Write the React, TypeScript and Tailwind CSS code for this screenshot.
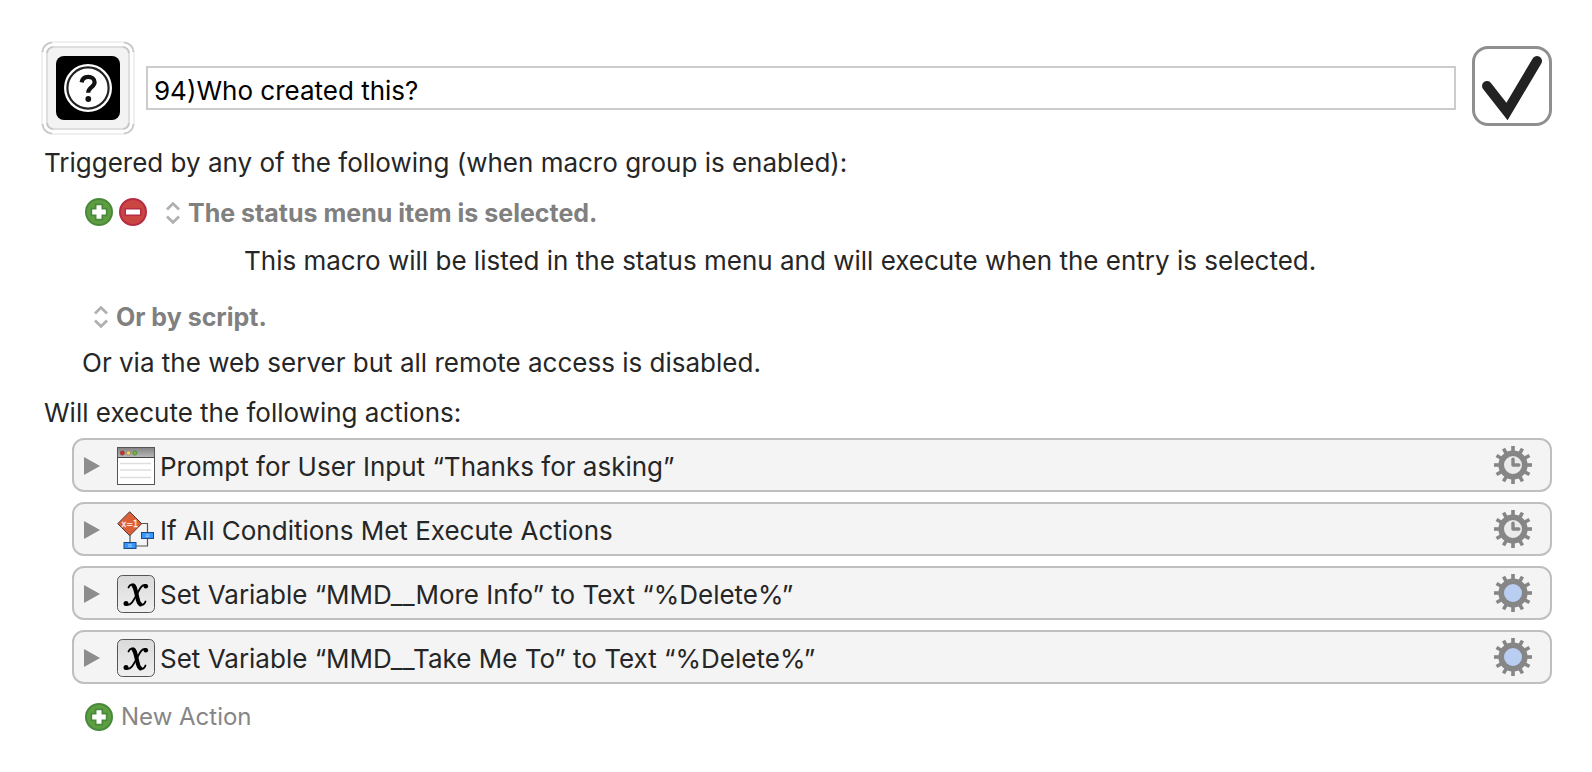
import { useState } from 'react';
import type { ReactNode } from 'react';

const gearAngles = [0, 30, 60, 90, 120, 150, 180, 210, 240, 270, 300, 330];

function Gear({ kind }: { kind: 'clock' | 'plain' }) {
  return (
    <svg viewBox="0 0 38 38" className="size-[38px]" aria-hidden="true">
      <g fill="#868686">
        {gearAngles.map((angle) => (
          <rect key={angle} x="17.2" y="0" width="3.6" height="7" transform={`rotate(${angle} 19 19)`} />
        ))}
      </g>
      <circle cx="19" cy="19" r="11.8" fill={kind === 'clock' ? '#ebebeb' : '#b9cef1'} stroke="#868686" strokeWidth="5.6" />
      {kind === 'clock' && (
        <path d="M19 13.2v5.8h5.8" fill="none" stroke="#868686" strokeWidth="3.4" strokeLinecap="round" strokeLinejoin="round" />
      )}
    </svg>
  );
}

function PlusIcon() {
  return (
    <svg viewBox="0 0 28 28" className="size-7" aria-hidden="true">
      <circle cx="14" cy="14" r="13" fill="#5f9e40" stroke="#488a3c" strokeWidth="2" />
      <path d="M11.5 7.2h5v4.3h4.3v5h-4.3v4.3h-5v-4.3H7.2v-5h4.3z" fill="#fff" stroke="#488a3c" strokeWidth="3.4" paintOrder="stroke" />
    </svg>
  );
}

function MinusIcon() {
  return (
    <svg viewBox="0 0 28 28" className="size-7" aria-hidden="true">
      <circle cx="14" cy="14" r="13" fill="#cb4543" stroke="#b52c43" strokeWidth="2" />
      <rect x="7" y="11.5" width="14" height="5" fill="#fff" stroke="#b52c43" strokeWidth="3" paintOrder="stroke" />
    </svg>
  );
}

function Chevrons() {
  return (
    <svg viewBox="0 0 14 22" className="h-[22px] w-[14px]" fill="none" stroke="#b0b0b0" strokeWidth="2.8" aria-hidden="true">
      <path d="M1 7.4 7 1.6l6 5.8M1 14.6l6 5.8 6-5.8" />
    </svg>
  );
}

function WindowIcon() {
  return (
    <svg viewBox="0 0 38 38" className="size-[38px]" aria-hidden="true">
      <defs>
        <linearGradient id="titlebar" x1="0" y1="0" x2="0" y2="1">
          <stop offset="0" stopColor="#858585" />
          <stop offset="1" stopColor="#b9b9b9" />
        </linearGradient>
      </defs>
      <rect x="0.5" y="0.5" width="37" height="37" fill="#fff" stroke="#555" />
      <rect x="1" y="1" width="36" height="9.5" fill="url(#titlebar)" />
      <path d="M0.5 10.5h37" stroke="#444" />
      <path d="M3 16.5h31M3 23h31M3 30.5h31" stroke="#dedede" strokeWidth="1.4" />
      <circle cx="5.3" cy="6" r="2.1" fill="#c9302b" stroke="#8c3a36" strokeWidth="0.7" />
      <circle cx="11.5" cy="6" r="2.1" fill="#f8cf78" stroke="#9d8150" strokeWidth="0.7" />
      <circle cx="17.8" cy="6" r="2.1" fill="#66bb38" stroke="#4a8030" strokeWidth="0.7" />
    </svg>
  );
}

function ConditionIcon() {
  return (
    <svg viewBox="0 0 38 38" className="size-[38px]" aria-hidden="true">
      <path d="M24 12.500h6.500v22.500H13V23" fill="none" stroke="#555" strokeWidth="1.2" />
      <path d="M12.700 0.700 24.700 12.700l-12 12-12-12z" fill="#dc5f37" stroke="#4d3a34" strokeWidth="1" />
      <text x="12.800" y="15.600" textAnchor="middle" fill="#fdeee6" stroke="#fdeee6" strokeWidth="0.3" className="font-['DejaVu_Sans'] text-[8px]">x=1</text>
      <rect x="24.500" y="21.500" width="12" height="6" fill="#3895fb" stroke="#1f4a80" />
      <rect x="7" y="31.500" width="12" height="6" fill="#3895fb" stroke="#1f4a80" />
      <path d="M28.500 23.800h4M28.500 25.300h4M11 33.800h4M11 35.300h4" stroke="#a5d0fd" strokeWidth="0.9" />
    </svg>
  );
}

function VariableIcon() {
  return (
    <svg viewBox="0 0 38 38" className="size-[38px]" aria-hidden="true">
      <defs>
        <linearGradient id="tile" x1="0" y1="0" x2="0" y2="1">
          <stop offset="0" stopColor="#d9d9d9" />
          <stop offset="1" stopColor="#f0f0f0" />
        </linearGradient>
      </defs>
      <rect x="0.5" y="0.5" width="37" height="37" rx="5" fill="url(#tile)" stroke="#555" />
      <g fill="none" stroke="#000" strokeLinecap="round">
        <path d="M11.5 12.5C12.500 9.500 17 7.500 18.500 12.500L21.500 24.500C22.500 31 26.500 31.500 28.500 26.500" strokeWidth="1.8" />
        <path d="M16.500 10.500C18 12 18.500 14.500 19 17L21 25.500C21.500 27.500 22 28.500 23.500 29.500" strokeWidth="4" />
        <path d="M29.300 10.300C24.500 8.500 22.500 14.500 19.800 19.500C16.500 25.500 13.500 31.500 9 29.500" strokeWidth="1.900" />
      </g>
      <circle cx="28.800" cy="11.200" r="2.300" />
      <circle cx="9" cy="28.600" r="2.500" />
    </svg>
  );
}

function MacroIcon() {
  return (
    <svg viewBox="0 0 94 94" className="size-[94px]" aria-hidden="true">
      <rect x="1" y="1" width="92" height="92" rx="11" fill="#fff" stroke="#f0f0f0" strokeWidth="2" />
      <g fill="none" stroke="#c4c4c4" strokeWidth="1.6">
        <path d="M1.500 11Q2.500 2.500 11 1.500M83 1.500Q91.500 2.500 92.500 11M92.500 83Q91.500 91.500 83 92.500M11 92.500Q2.500 91.500 1.500 83" />
      </g>
      <rect x="6" y="6" width="82" height="82" rx="7" fill="#f3f3f3" stroke="#dedede" strokeWidth="2" />
      <path d="M6 12Q6.500 6.500 12 6M82 6Q87.500 6.500 88 12M88 82Q87.500 87.500 82 88M12 88Q6.500 87.500 6 82" fill="none" stroke="#c4c4c4" strokeWidth="1.600" />
      <g transform="translate(15 15)">
        <rect width="64" height="64" rx="8" />
        <circle cx="32" cy="32" r="24" fill="#fff" />
        <circle cx="32" cy="32" r="20.600" fill="none" stroke="#222" strokeWidth="2.200" />
        <path d="M25.600 26.300c.7-3.800 3.200-5.400 6.600-5.400 3.800 0 6.400 2.100 6.400 5.300 0 5-6.400 5-6.400 10.600" fill="none" stroke="#111" strokeWidth="4.200" />
        <circle cx="32.300" cy="43" r="2.900" fill="#111" />
      </g>
    </svg>
  );
}

function ActionRow({ icon, gear, children }: { icon: ReactNode; gear: 'clock' | 'plain'; children: ReactNode }) {
  return (
    <li className="flex h-[54px] items-center rounded-xl border-2 border-[#bfbfbf] bg-[#f4f4f4] pt-[2px] pr-[18px] pl-[10px]">
      <button type="button" aria-label="Expand action" className="mr-4 flex w-[17px] shrink-0">
        <svg viewBox="0 0 16 18" className="h-[18px] w-4" fill="#8d8d8d" aria-hidden="true">
          <path d="M0 0 16 9 0 18z" />
        </svg>
      </button>
      <span className="mr-[5px] shrink-0">{icon}</span>
      <span className="grow pt-[2px] whitespace-nowrap">{children}</span>
      <button type="button" aria-label="Action options" className="mb-[2px] shrink-0">
        <Gear kind={gear} />
      </button>
    </li>
  );
}

export default function App() {
  const [name, setName] = useState('94)Who created this?');
  const [enabled, setEnabled] = useState(true);

  return (
    <main className="min-h-screen bg-white pt-[41px] pr-10 pb-10 pl-[41px] font-['Inter',sans-serif] text-[26px] leading-8 text-[#262626]">
      <header className="flex items-center">
        <button type="button" aria-label="Macro icon" className="shrink-0">
          <MacroIcon />
        </button>
        <input
          type="text"
          aria-label="Macro name"
          value={name}
          onChange={(e) => setName(e.target.value)}
          className="mr-4 ml-[11px] h-11 min-w-0 grow border-2 border-[#cccccc] px-[6px] pt-[5px] text-black outline-none"
        />
        <label className="relative mb-1 size-20 shrink-0">
          <input
            type="checkbox"
            aria-label="Macro enabled"
            checked={enabled}
            onChange={(e) => setEnabled(e.target.checked)}
            className="block size-20 appearance-none rounded-2xl border-3 border-[#8f8f8f] bg-white"
          />
          {enabled && (
            <svg viewBox="0 0 80 80" className="pointer-events-none absolute inset-0 size-20" aria-hidden="true">
              <path d="M15 40 35 65.500 65 15" fill="none" stroke="#222" strokeWidth="10" strokeLinecap="round" strokeMiterlimit="10" />
            </svg>
          )}
        </label>
      </header>

      <section className="mt-3">
        <h2 className="pl-[3px]">Triggered by any of the following (when macro group is enabled):</h2>
        <div className="mt-[18px] flex items-center pl-11 text-[#808080]">
          <button type="button" aria-label="Add trigger" className="mb-[2px]"><PlusIcon /></button>
          <button type="button" aria-label="Remove trigger" className="mb-[2px] ml-[6px]"><MinusIcon /></button>
          <button type="button" className="ml-[19px] flex items-center gap-2 text-[25px] font-bold">
            <Chevrons />
            The status menu item is selected.
          </button>
        </div>
        <p className="mt-4 pl-[203px]">This macro will be listed in the status menu and will execute when the entry is selected.</p>
        <button type="button" className="mt-6 ml-[53px] flex items-center gap-2 text-[25px] font-bold text-[#808080]">
          <Chevrons />
          Or by script.
        </button>
        <p className="mt-[14px] pl-[41px]">Or via the web server but all remote access is disabled.</p>
      </section>

      <section className="mt-[18px]">
        <h2 className="pl-[3px]">Will execute the following actions:</h2>
        <ul className="mt-[9px] ml-[31px] flex flex-col gap-[10px]">
          <ActionRow icon={<WindowIcon />} gear="clock">Prompt for User Input “Thanks for asking”</ActionRow>
          <ActionRow icon={<ConditionIcon />} gear="clock">If All Conditions Met Execute Actions</ActionRow>
          <ActionRow icon={<VariableIcon />} gear="plain">Set Variable “MMD__More Info” to Text “%Delete%”</ActionRow>
          <ActionRow icon={<VariableIcon />} gear="plain">Set Variable “MMD__Take Me To” to Text “%Delete%”</ActionRow>
        </ul>
        <button type="button" className="mt-[17px] ml-11 flex items-center gap-2 text-[24px] text-[#868686]">
          <PlusIcon />
          New Action
        </button>
      </section>
    </main>
  );
}
